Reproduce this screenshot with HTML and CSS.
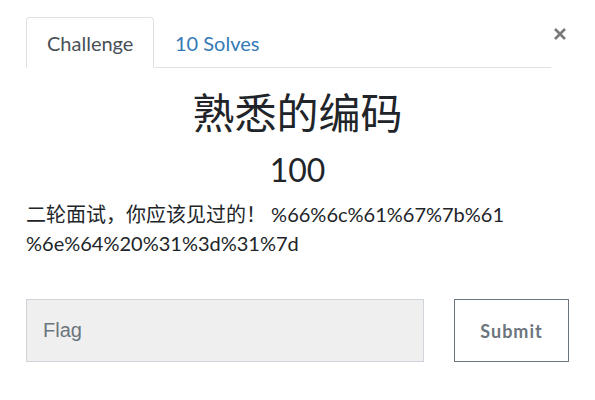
FILE: index.html
```html
<!DOCTYPE html>
<html lang="zh">
<head>
<meta charset="utf-8">
<link rel="stylesheet" href="styles.css">
</head>
<body>
<div class="modal">
  <button class="close" aria-label="Close">
    <svg width="14" height="14" viewBox="0 0 14 14"><path d="M2 2 L12 12 M12 2 L2 12" stroke="#7a7a7a" stroke-width="2.6" stroke-linecap="butt"/></svg>
  </button>
  <div class="tabs">
    <div class="tab active">Challenge</div>
    <div class="tab link">10 Solves</div>
  </div>
  <h1 class="title">熟悉的编码</h1>
  <h2 class="value">100</h2>
  <p class="desc">二轮面试，你应该见过的！ %66%6c%61%67%7b%61 %6e%64%20%31%3d%31%7d</p>
  <form class="submit-row">
    <input class="flag" type="text" placeholder="Flag">
    <button class="submit" type="button">Submit</button>
  </form>
</div>
</body>
</html>
```
FILE: styles.css
```css
html, body { margin: 0; padding: 0; background: #fff; }
body { font-family: Lato, "Noto Sans CJK SC", sans-serif; color: #212529; }
.modal { position: relative; padding: 17px 26px 0 26px; width: 543px; }
.close { position: absolute; top: 27px; left: 553px; border: 0; background: none; padding: 0; width: 14px; height: 14px; display: block; }
.close svg { display: block; }
.tabs { display: flex; border-bottom: 1px solid #dee2e6; height: 50px; margin-right: 18px; }
.tab { font-size: 20px; padding: 0 20px 0; line-height: 50px; border: 1px solid transparent; border-radius: 4px 4px 0 0; margin-bottom: -1px; }
.tab.active { border-color: #dee2e6 #dee2e6 #fff; color: #495057; width: 86px; }
.tab.link { color: #337ab7; }
.title { text-align: center; font-weight: 400; font-size: 42px; margin: 17px 0 0; line-height: 56px; }
.value { text-align: center; font-weight: 400; font-size: 32px; margin: 4px 0 0; line-height: 50px; }
.desc { font-size: 20px; line-height: 29px; margin: 5px 0 0; }
.submit-row { display: flex; gap: 30px; margin-top: 41px; }
.flag { flex: none; width: 398px; height: 63px; box-sizing: border-box; background: #efefef; border: 1px solid #ced4da; font-family: "Liberation Sans", Arial, sans-serif; font-size: 20px; padding: 0 16px; color: #495057; }
.flag::placeholder { color: #6c757d; }
.submit { flex: none; width: 115px; height: 63px; box-sizing: border-box; background: #fff; border: 1px solid #6c757d; color: #6c757d; font-family: Lato, sans-serif; font-weight: 700; font-size: 18px; letter-spacing: 1px; }
```
